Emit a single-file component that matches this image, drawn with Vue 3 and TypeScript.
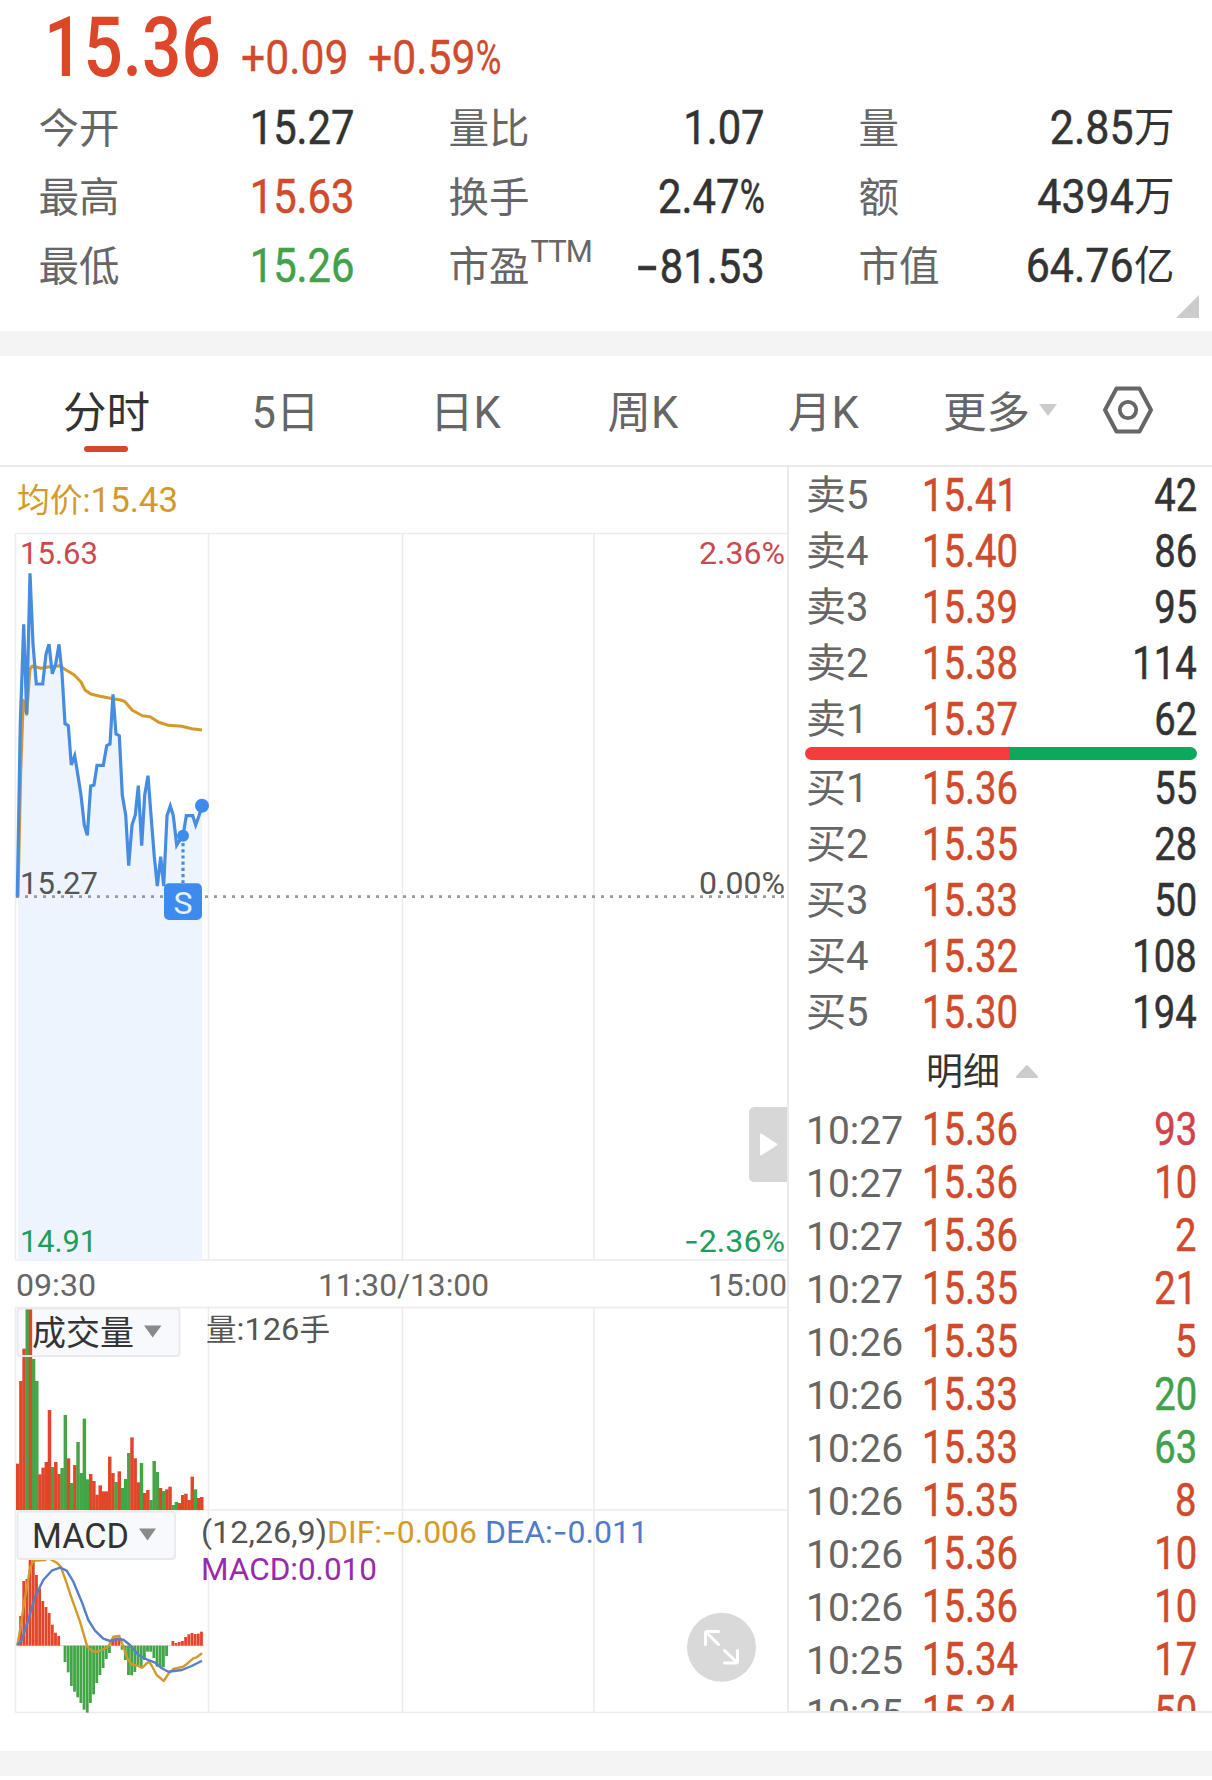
<script setup lang="ts">
interface Stat { label: string; sup?: string; value: string; unit?: string; tone?: string; neg?: boolean; pct?: boolean }
interface Quote { label: string; price: string; vol: string }
interface Tick { time: string; price: string; vol: string; tone?: string }

const stats: Stat[] = [
  { label: '今开', value: '15.27' },
  { label: '量比', value: '1.07' },
  { label: '量', value: '2.85', unit: '万' },
  { label: '最高', value: '15.63', tone: 'up' },
  { label: '换手', value: '2.47', pct: true },
  { label: '额', value: '4394', unit: '万' },
  { label: '最低', value: '15.26', tone: 'down' },
  { label: '市盈', sup: 'TTM', value: '81.53', neg: true },
  { label: '市值', value: '64.76', unit: '亿' },
]

const tabs = ['分时', '5日', '日K', '周K', '月K']

const asks: Quote[] = [
  { label: '卖5', price: '15.41', vol: '42' },
  { label: '卖4', price: '15.40', vol: '86' },
  { label: '卖3', price: '15.39', vol: '95' },
  { label: '卖2', price: '15.38', vol: '114' },
  { label: '卖1', price: '15.37', vol: '62' },
]
const bids: Quote[] = [
  { label: '买1', price: '15.36', vol: '55' },
  { label: '买2', price: '15.35', vol: '28' },
  { label: '买3', price: '15.33', vol: '50' },
  { label: '买4', price: '15.32', vol: '108' },
  { label: '买5', price: '15.30', vol: '194' },
]
const ticks: Tick[] = [
  { time: '10:27', price: '15.36', vol: '93', tone: 'hot' },
  { time: '10:27', price: '15.36', vol: '10' },
  { time: '10:27', price: '15.36', vol: '2' },
  { time: '10:27', price: '15.35', vol: '21' },
  { time: '10:26', price: '15.35', vol: '5' },
  { time: '10:26', price: '15.33', vol: '20', tone: 'down' },
  { time: '10:26', price: '15.33', vol: '63', tone: 'down' },
  { time: '10:26', price: '15.35', vol: '8' },
  { time: '10:26', price: '15.36', vol: '10' },
  { time: '10:26', price: '15.36', vol: '10' },
  { time: '10:25', price: '15.34', vol: '17' },
  { time: '10:25', price: '15.34', vol: '50' },
]

// Series are stored in thirds of a pixel, relative to the top of their pane.
type Pt = [number, number]
const toPoints = (pts: Pt[], top: number): string =>
  pts.map(([x, y]) => `${(x / 3).toFixed(1)},${(top + y / 3).toFixed(1)}`).join(' ')

const price: Pt[] = [[52, 1130], [61, 610], [71, 313], [80, 583], [90, 160], [99, 372], [109, 492], [128, 492], [138, 402], [147, 373], [157, 461], [167, 432], [177, 373], [186, 460], [195, 611], [205, 617], [214, 735], [224, 707], [234, 767], [243, 826], [253, 915], [262, 946], [272, 798], [282, 795], [291, 736], [310, 736], [320, 677], [330, 672], [339, 523], [348, 642], [358, 647], [367, 826], [377, 885], [386, 1037], [396, 915], [406, 885], [415, 797], [425, 977], [434, 826], [444, 767], [453, 885], [463, 1010], [472, 1098], [482, 1010], [491, 1098], [501, 887], [511, 858], [520, 887], [530, 976], [540, 960], [549, 947], [559, 887], [578, 887], [587, 915], [597, 887], [606, 857]]
const avg: Pt[] = [[54, 1130], [62, 760], [70, 541], [80, 583], [90, 447], [97, 438], [122, 445], [150, 440], [180, 437], [192, 446], [222, 464], [243, 486], [255, 510], [272, 522], [300, 529], [340, 536], [362, 540], [375, 545], [397, 571], [427, 587], [450, 590], [475, 606], [505, 616], [545, 619], [575, 626], [606, 630]]
const dif: Pt[] = [[52, 436], [62, 380], [72, 310], [82, 255], [90, 205], [100, 182], [135, 180], [145, 172], [155, 180], [170, 188], [182, 200], [195, 235], [215, 295], [240, 365], [262, 440], [275, 453], [290, 455], [310, 448], [325, 440], [340, 410], [358, 408], [370, 440], [382, 475], [395, 493], [412, 497], [427, 503], [437, 493], [447, 485], [457, 500], [470, 525], [480, 533], [491, 543], [505, 522], [520, 507], [550, 500], [565, 488], [580, 475], [590, 472], [606, 460]]
const dea: Pt[] = [[52, 436], [65, 420], [85, 360], [105, 290], [130, 240], [155, 212], [180, 203], [200, 212], [220, 245], [245, 305], [265, 360], [285, 392], [310, 416], [330, 423], [350, 417], [370, 419], [390, 435], [415, 465], [440, 478], [465, 488], [485, 505], [505, 515], [545, 510], [575, 498], [606, 482]]

const pricePoints = toPoints(price, 520)
const areaPoints = `18,1260 18,860 ${toPoints(price.slice(1), 520)} 202,1260`

const volTops = [521, 273, 176, 57, 57, 207, 273, 553, 533, 516, 360, 531, 516, 552, 534, 375, 505, 579, 525, 456, 549, 386, 568, 552, 573, 614, 586, 604, 604, 500, 549, 576, 544, 594, 567, 489, 442, 505, 577, 519, 609, 600, 630, 513, 546, 594, 603, 598, 590, 645, 636, 639, 615, 611, 630, 560, 598, 624, 621]
const volTone = 'rrrgrggrrrrgrrggrgrggggrrrrrrrrgrgggrrrgrrgggrgrrggrrrrrgrr'
const red = '#e2452a'
const green = '#42a646'
const STEP = 9.52 / 3
const volBars = volTops.map((t, i) => ({
  x: 16 + i * STEP, y: 1290 + t / 3, h: (660 - t) / 3, c: volTone[i] === 'g' ? green : red,
}))

const ZERO = 437
const macdEnds: Record<number, number[]> = {
  1: [348, 243, 237, 170, 178, 225, 265, 303, 321, 339, 374, 398, 408],
  15: [486, 517, 558, 575, 592, 609, 629, 638, 609, 583, 549, 525, 504, 477, 459],
  30: [420, 413, 413, 449, 480, 525, 526, 516, 495, 505, 480, 455, 455, 474, 500, 502, 502, 468],
  49: [423, 429, 426, 423, 411, 403, 399, 402, 401, 395],
}
const macdBars = Object.entries(macdEnds).flatMap(([start, ends]) =>
  ends.map((e, k) => ({
    x: 16 + (Number(start) + k) * STEP,
    y: 1500 + Math.min(e, ZERO) / 3,
    h: Math.abs(e - ZERO) / 3,
    c: e < ZERO ? red : green,
  })))

const askShare = 52
</script>

<template>
  <div class="page">
    <header class="summary">
      <div class="headline">
        <span class="last"><span class="sx">15.36</span></span>
        <span class="chg"><span class="sx">+0.09</span></span>
        <span class="chg"><span class="sx">+0.59<i class="pct">%</i></span></span>
      </div>
      <div class="stats">
        <div v-for="s in stats" :key="s.label" class="stat">
          <span class="lab">{{ s.label }}<sup v-if="s.sup">{{ s.sup }}</sup></span>
          <span class="val" :class="s.tone"><span class="sx right"><i v-if="s.neg" class="neg wide">-</i>{{ s.value }}<i v-if="s.pct" class="pct">%</i></span><span v-if="s.unit" class="unit">{{ s.unit }}</span></span>
        </div>
      </div>
      <svg class="corner" width="23" height="23" viewBox="0 0 23 23"><path d="M23 0V23H0Z" fill="#ccc" /></svg>
    </header>

    <div class="band"></div>

    <nav class="tabs">
      <div v-for="(t, i) in tabs" :key="t" class="tab" :class="{ active: i === 0 }"><span>{{ t }}</span></div>
      <div class="tab more">
        <span>更多</span>
        <svg width="18" height="12" viewBox="0 0 18 12"><path d="M0 0H18L9 12Z" fill="#ccc" /></svg>
      </div>
      <svg class="gear" width="52" height="50" viewBox="0 0 52 50" fill="none" stroke="#666" stroke-linejoin="round">
        <path d="M14.5 3.5H37.5L49 25L37.5 46.500H14.5L3 25Z" stroke-width="4" />
        <circle cx="26" cy="25" r="8.2" stroke-width="3.800" />
      </svg>
    </nav>

    <main class="body">
      <svg class="chart" width="787" height="1247" viewBox="0 467 787 1247">
        <g stroke="#ececec" stroke-width="1.500" fill="none">
          <path d="M15.500 533.500H787M15.500 1260H787M15.500 1307.500H787M15.500 1510H787M15.500 1712.500H787" />
          <path v-for="x in [15.5, 208.5, 402.5, 594]" :key="x" :d="`M${x} 533.500V1260M${x} 1307.500V1712.500`" />
        </g>

        <text x="17" y="512" fill="#d3992b" font-size="33" textLength="161" lengthAdjust="spacingAndGlyphs">均价:<tspan font-size="35">15.43</tspan></text>

        <polygon :points="areaPoints" fill="#edf4fd" />
        <path d="M16 896.700H787" stroke="#999" stroke-width="2.800" stroke-dasharray="3 6" />
        <polyline :points="toPoints(avg, 520)" fill="none" stroke="#d3992b" stroke-width="3" stroke-linejoin="round" />
        <polyline :points="pricePoints" fill="none" stroke="#468ce0" stroke-width="3.200" />

        <g font-size="32">
          <text x="20" y="564" fill="#c94a4d" textLength="78" lengthAdjust="spacingAndGlyphs">15.63</text>
          <text x="785" y="564" fill="#c94a4d" text-anchor="end" textLength="86" lengthAdjust="spacingAndGlyphs">2.36%</text>
          <text x="20" y="894" fill="#555" textLength="78" lengthAdjust="spacingAndGlyphs">15.27</text>
          <text x="785" y="894" fill="#555" text-anchor="end" textLength="86" lengthAdjust="spacingAndGlyphs">0.00%</text>
          <text x="20" y="1252" fill="#1f9d5b" textLength="77" lengthAdjust="spacingAndGlyphs">14.91</text>
          <text x="785" y="1252" fill="#1f9d5b" text-anchor="end" textLength="101" lengthAdjust="spacingAndGlyphs"><tspan class="neg">-</tspan>2.36%</text>
          <text x="16" y="1296" fill="#666" textLength="80" lengthAdjust="spacingAndGlyphs">09:30</text>
          <text x="318" y="1296" fill="#666" textLength="171" lengthAdjust="spacingAndGlyphs">11:30/13:00</text>
          <text x="787" y="1296" fill="#666" text-anchor="end" textLength="79" lengthAdjust="spacingAndGlyphs">15:00</text>
        </g>

        <!-- sell marker -->
        <path d="M183 843V883" stroke="#468ce0" stroke-width="3.200" stroke-dasharray="3.200 3" />
        <circle cx="183" cy="835.700" r="6" fill="#3e8bef" />
        <circle cx="202" cy="805.700" r="7" fill="#3e8bef" />
        <rect x="164" y="883.300" width="38" height="36.700" rx="5" fill="#3e8bef" />
        <text x="183" y="914" fill="#e6f0fd" font-size="32" text-anchor="middle">S</text>

        <!-- drawer handle -->
        <path d="M787 1107V1182H755Q749 1182 749 1176V1113Q749 1107 755 1107Z" fill="#d7d7d7" />
        <path d="M761 1134.500L776.500 1144.500L761 1154.500Z" fill="#fff" stroke="#fff" stroke-width="2" stroke-linejoin="round" />

        <!-- volume pane -->
        <rect x="17.500" y="1308.500" width="162" height="47.500" rx="3" fill="#f8f9fd" />
        <rect v-for="(b, i) in volBars" :key="'v' + i" :x="b.x" :y="b.y" :width="STEP + 0.3" :height="b.h" :fill="b.c" />
        <rect x="17.500" y="1308.500" width="162" height="47.500" rx="3" fill="none" stroke="#e9e9ec" stroke-width="1.800" />
        <text x="32" y="1345" fill="#333" font-size="34">成交量</text>
        <path d="M144 1325.500H161.500L152.700 1337.500Z" fill="#8a8a8a" />
        <text x="206" y="1340" fill="#555" font-size="30" textLength="124" lengthAdjust="spacingAndGlyphs">量<tspan font-size="32">:126</tspan>手</text>

        <!-- MACD pane -->
        <rect v-for="(b, i) in macdBars" :key="'m' + i" :x="b.x" :y="b.y" :width="STEP - 0.35" :height="b.h" :fill="b.c" />
        <path d="M16 1645.700H204" stroke="#e2452a" stroke-opacity="0.35" stroke-width="0.800" />
        <polyline :points="toPoints(dif, 1500)" fill="none" stroke="#d3992b" stroke-width="2.400" stroke-linejoin="round" />
        <polyline :points="toPoints(dea, 1500)" fill="none" stroke="#557fc9" stroke-width="2.400" stroke-linejoin="round" />
        <rect x="17.500" y="1511.500" width="157.500" height="47.500" rx="3" fill="#f8f9fd" stroke="#e9e9ec" stroke-width="1.800" />
        <text x="32" y="1548" fill="#333" font-size="34.500" textLength="97" lengthAdjust="spacingAndGlyphs">MACD</text>
        <path d="M139 1528.500H156L147.500 1540.500Z" fill="#8a8a8a" />
        <g font-size="32">
          <text x="201" y="1543" fill="#555" textLength="126" lengthAdjust="spacingAndGlyphs">(12,26,9)</text>
          <text x="327" y="1543" fill="#d3992b" textLength="150" lengthAdjust="spacingAndGlyphs">DIF:<tspan class="neg">-</tspan>0.006</text>
          <text x="485" y="1543" fill="#4f7cc9" textLength="163" lengthAdjust="spacingAndGlyphs">DEA:<tspan class="neg">-</tspan>0.011</text>
          <text x="201" y="1580" fill="#972bab" textLength="176" lengthAdjust="spacingAndGlyphs">MACD:0.010</text>
        </g>

        <!-- expand button -->
        <circle cx="721.500" cy="1647.300" r="34.500" fill="#d9d9d9" />
        <g fill="none" stroke="#fff" stroke-width="3" stroke-linecap="round" stroke-linejoin="round">
          <path d="M705.500 1644.500V1633Q705.500 1631.500 707 1631.500H718.500M706.500 1632.500L718.500 1644.500" />
          <path d="M737.500 1650.500V1661.500Q737.500 1663 736 1663H724.500M736.500 1662L724.500 1650.500" />
        </g>
      </svg>

      <aside class="book">
        <div v-for="q in asks" :key="q.label" class="row">
          <span class="name">{{ q.label }}</span><span class="px"><span class="sx">{{ q.price }}</span></span><span class="qty"><span class="sx right">{{ q.vol }}</span></span>
        </div>
        <div class="ratio"><div class="ask" :style="{ width: askShare + '%' }"></div><div class="bid"></div></div>
        <div v-for="q in bids" :key="q.label" class="row">
          <span class="name">{{ q.label }}</span><span class="px"><span class="sx">{{ q.price }}</span></span><span class="qty"><span class="sx right">{{ q.vol }}</span></span>
        </div>
        <div class="detail">
          <span>明细</span>
          <svg width="24" height="13" viewBox="0 0 24 13"><path d="M2 12L12 1L22 12Z" fill="#ccc" stroke="#ccc" stroke-width="2" stroke-linejoin="round" /></svg>
        </div>
        <div class="ticks">
          <div v-for="(t, i) in ticks" :key="i" class="row tick">
            <span class="name">{{ t.time }}</span><span class="px"><span class="sx">{{ t.price }}</span></span><span class="qty" :class="t.tone || 'up'"><span class="sx right">{{ t.vol }}</span></span>
          </div>
        </div>
      </aside>
    </main>

    <div class="foot"></div>
  </div>
</template>

<style>
body { margin: 0; background: #fff; }
</style>

<style scoped>
.page {
  width: 1212px;
  height: 1780px;
  overflow: hidden;
  background: #fff;
  color: #333;
  font-family: Roboto, "Noto Sans CJK SC", sans-serif;
  display: flex;
  flex-direction: column;
}
.sx {
  display: inline-block;
  transform: scaleX(0.87);
  transform-origin: left center;
  font-weight: 400;
  -webkit-text-stroke: 0.5px currentColor;
}
.sx.right { transform-origin: right center; }
.neg { font-family: Inter, sans-serif; font-style: normal; }
.wide { display: inline-block; transform: scaleX(1.3); transform-origin: right center; }
.pct {
  display: inline-block;
  font-style: normal;
  transform: scaleX(0.82);
  transform-origin: left center;
  margin-right: -0.13em;
}
.up { color: #d04a2c; }
.down { color: #42a14a; }
.hot { color: #cf434c; }

.summary { position: relative; height: 331px; flex: none; }
.headline {
  display: grid;
  grid-template-columns: 197px 127px auto;
  align-items: baseline;
  padding-left: 44px;
  height: 93px;
  line-height: 95px;
  color: #dd4628;
  white-space: nowrap;
}
.last { font-size: 82.5px; }
.last .sx { transform: scaleX(0.84); font-weight: 500; -webkit-text-stroke: 0; }
.chg { position: relative; top: -2px; font-size: 48px; color: #d04a2c; }
.chg .sx { transform: scaleX(0.89); -webkit-text-stroke: 0.3px currentColor; }
.stats {
  display: grid;
  grid-template-columns: repeat(3, 316px);
  column-gap: 94px;
  grid-auto-rows: 69px;
  padding-left: 38.5px;
}
.stat { display: flex; justify-content: space-between; line-height: 69px; white-space: nowrap; }
.lab { font-size: 40.5px; color: #666; padding-top: 1.5px; height: 67px; }
.lab sup { font-size: 31px; line-height: 0; vertical-align: 19px; margin-left: 1px; letter-spacing: -1px; }
.val { display: flex; font-size: 48px; }
.val .sx:not(:last-child) { transform: scaleX(0.895); }
.unit { font-size: 40.5px; margin-left: 0; padding-top: 1px; height: 67px; }
.corner { position: absolute; right: 13px; bottom: 13px; }

.band { height: 25px; background: #f4f4f4; flex: none; }

.tabs {
  display: grid;
  grid-template-columns: 213px 145px 215px 140px 221px 168px 52px;
  height: 109px;
  flex: none;
  border-bottom: 2px solid #eaeaea;
  font-size: 43.5px;
  line-height: 115px;
  color: #666;
}
.tab { position: relative; height: 109px; text-align: center; white-space: nowrap; }
.tab.active { color: #333; }
.tab.active::after {
  content: "";
  position: absolute;
  left: 84px;
  bottom: 13px;
  width: 44px;
  height: 6.5px;
  border-radius: 4px;
  background: #d2492a;
}
.more { display: flex; align-items: flex-start; gap: 9px; padding-left: 9px; }
.more svg { margin-top: 48px; }
.gear { margin-top: 29px; }

.body { display: flex; flex: none; height: 1247px; }
.chart { display: block; flex: none; }
.book {
  box-sizing: border-box;
  width: 425px;
  height: 1246px;
  border-left: 2px solid #eaeaea;
  border-bottom: 2px solid #eaeaea;
  overflow: hidden;
}
.row {
  display: grid;
  grid-template-columns: 116px 150px 1fr;
  padding: 0 15px 0 17px;
  height: 56px;
  line-height: 58px;
  white-space: nowrap;
}
.name { font-size: 40px; color: #666; }
.px { font-size: 45.5px; color: #d04a2c; }
.qty { font-size: 45.5px; text-align: right; }
.px .sx, .qty .sx { transform: scaleX(0.84); }
.ratio { display: flex; height: 13px; margin: 0 15px 0 16px; border-radius: 7px; overflow: hidden; }
.ask { background: #f63d3e; }
.bid { flex: 1; background: #0ca95c; }
.detail { display: flex; align-items: flex-start; gap: 15px; padding-left: 137px; height: 62px; font-size: 37px; line-height: 66px; }
.detail svg { margin-top: 25px; }
.tick { height: 53px; line-height: 56px; }
.tick .name { font-size: 39px; padding-top: 1px; height: 52px; }

.foot { margin-top: 37px; height: 25px; background: #f4f4f4; flex: none; }
</style>
